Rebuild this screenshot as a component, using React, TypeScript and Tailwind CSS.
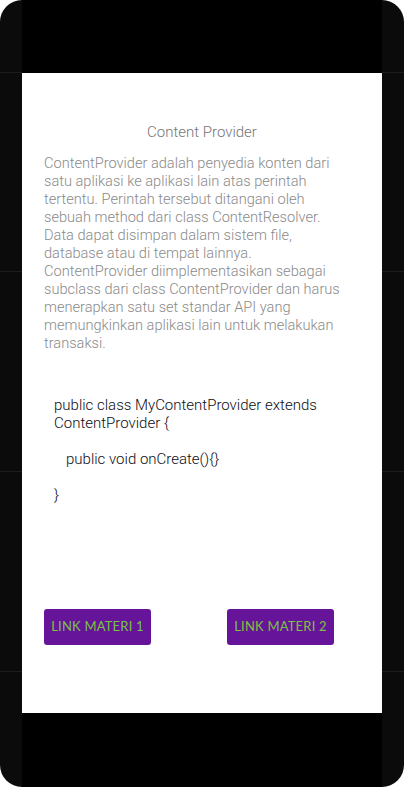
import React from "react";

export default function App() {
  return (
    <div className="w-[404px] h-[787px] bg-[#0b0b0b] rounded-[22px] overflow-hidden flex" style={{ fontFamily: "Roboto, 'Liberation Sans', sans-serif" }}>
      <div className="w-[22px] flex flex-col">
        <div className="h-[73px] border-b border-[#1c1c1c]" />
        <div className="h-[199px] border-b border-[#1c1c1c]" />
        <div className="h-[200px] border-b border-[#1c1c1c]" />
        <div className="h-[200px] border-b border-[#1c1c1c]" />
      </div>
      <div className="w-[360px] flex flex-col">
        <div className="h-[73px] bg-black" />
        <div className="h-[640px] bg-white flex flex-col px-[22px]">
          <h1 className="mt-[50px] text-center text-[15px] leading-[18px] font-light text-[#757575]">Content Provider</h1>
          <p className="mt-[13px] w-[306px] text-[14.6px] leading-[18px] font-light text-[#8a8a8a]">
            ContentProvider adalah penyedia konten dari satu aplikasi ke aplikasi lain atas perintah tertentu. Perintah tersebut ditangani oleh sebuah method dari class ContentResolver. Data dapat disimpan dalam sistem file, database atau di tempat lainnya. ContentProvider diimplementasikan sebagai subclass dari class ContentProvider dan harus menerapkan satu set standar API yang memungkinkan aplikasi lain untuk melakukan transaksi.
          </p>
          <div className="mt-[44px] pl-[10px] text-[15px] leading-[18px] font-light text-[#0d0d14]">
            <div>public class MyContentProvider extends</div>
            <div>ContentProvider {"{"}</div>
            <div className="h-[18px]" />
            <div className="pl-[12px]">public void onCreate(){"{}"}</div>
            <div className="h-[18px]" />
            <div>{"}"}</div>
          </div>
          <div className="mt-[105px] flex justify-between pr-[26px]">
            <button className="w-[107px] h-[36px] rounded-[3px] bg-[#66149a] text-[#7cc242] text-[13px] tracking-[0.2px]" style={{ fontFamily: "Lato, sans-serif" }}>LINK MATERI 1</button>
            <button className="w-[107px] h-[36px] rounded-[3px] bg-[#66149a] text-[#7cc242] text-[13px] tracking-[0.2px]" style={{ fontFamily: "Lato, sans-serif" }}>LINK MATERI 2</button>
          </div>
        </div>
        <div className="flex-1 bg-black" />
      </div>
      <div className="w-[22px] flex flex-col">
        <div className="h-[73px] border-b border-[#1c1c1c]" />
        <div className="h-[199px] border-b border-[#1c1c1c]" />
        <div className="h-[200px] border-b border-[#1c1c1c]" />
        <div className="h-[200px] border-b border-[#1c1c1c]" />
      </div>
    </div>
  );
}
